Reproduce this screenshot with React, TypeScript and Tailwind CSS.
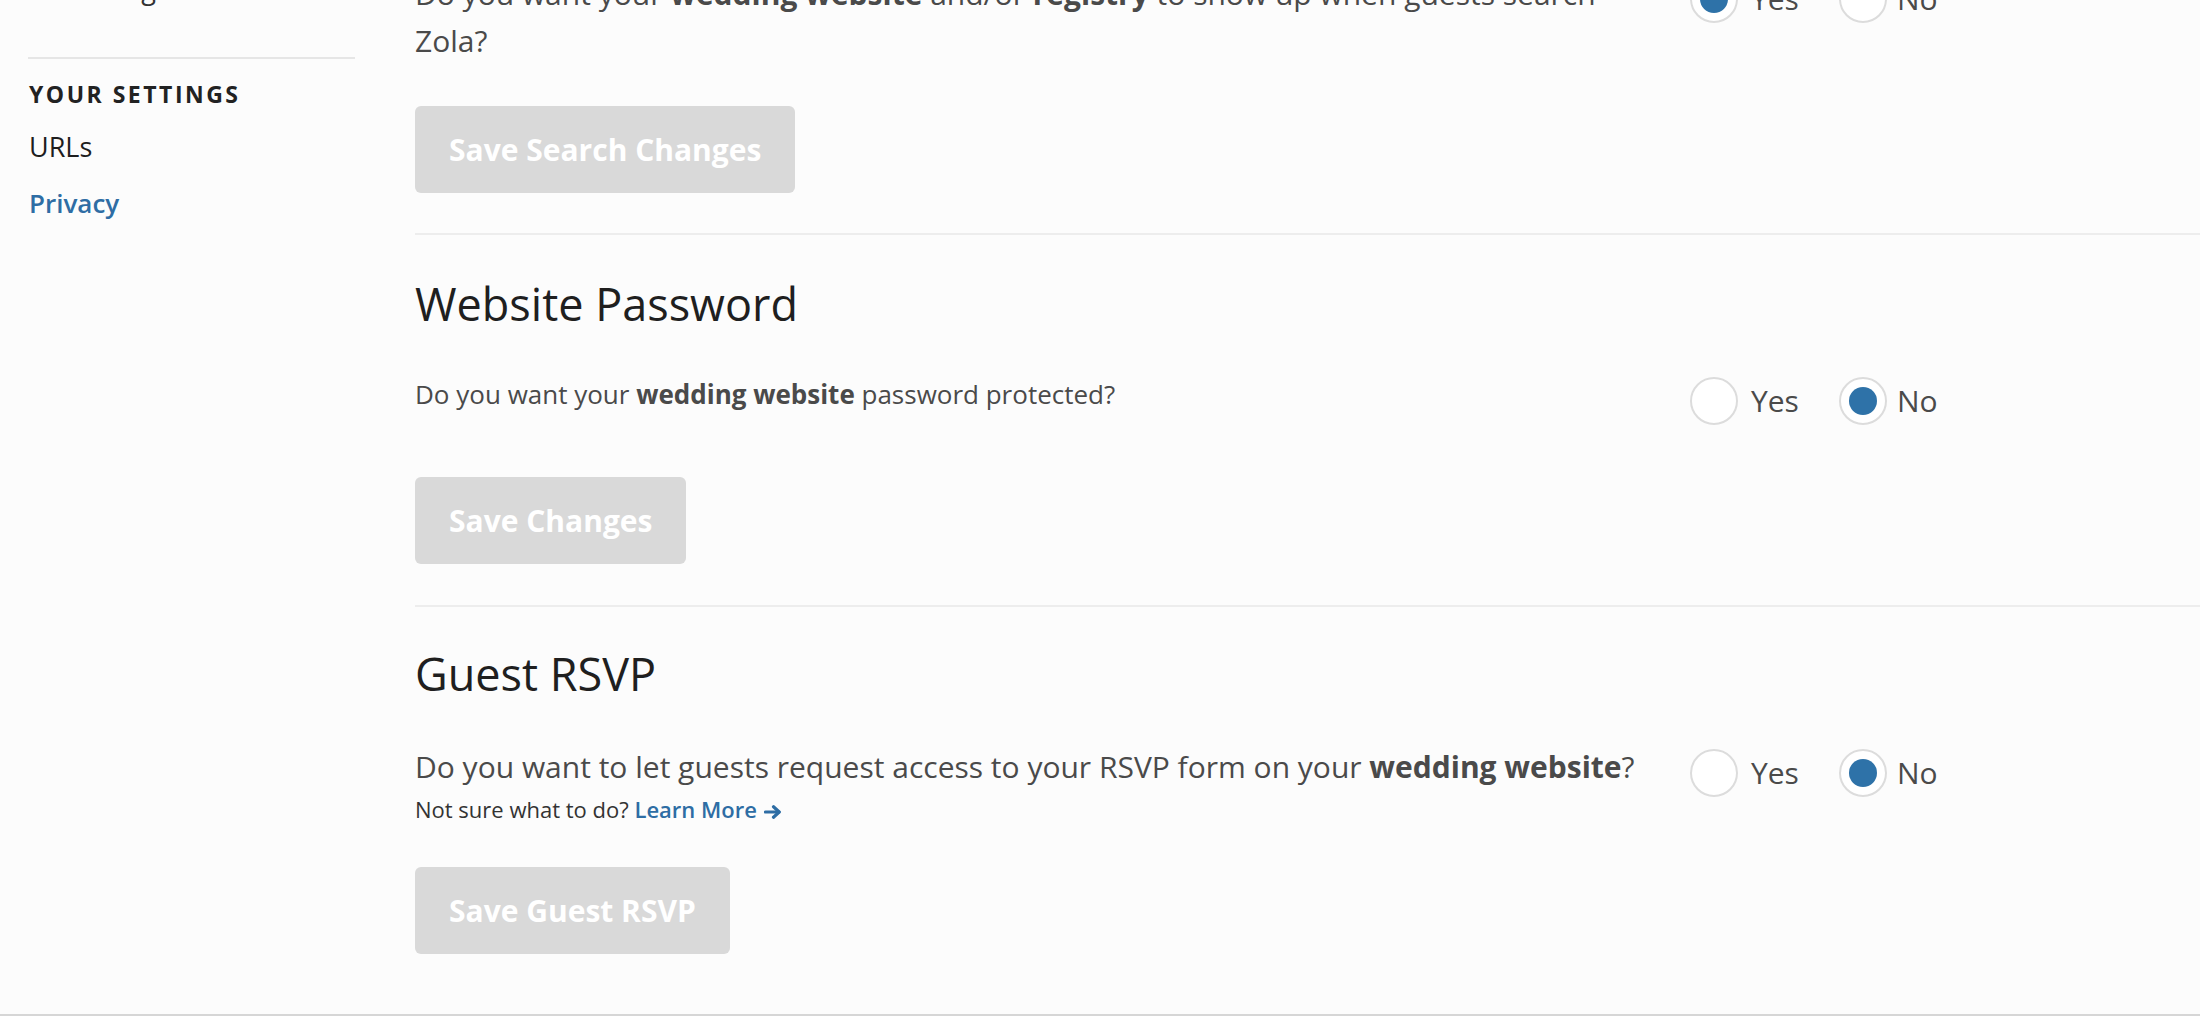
import React from 'react';

type RadioProps = { yes: boolean };

function Dot({ on }: { on: boolean }) {
  return (
    <span className="flex h-[48px] w-[48px] shrink-0 items-center justify-center rounded-full border-2 border-[#dcdcdc] bg-white">
      {on && <span className="h-[28px] w-[28px] rounded-full bg-[#2e72a8]" />}
    </span>
  );
}

function YesNo({ yes }: RadioProps) {
  return (
    <div className="flex items-center text-[30px] leading-[48px] text-[#4a4a4a]">
      <label className="flex items-center">
        <Dot on={yes} />
        <span className="ml-[13px]">Yes</span>
      </label>
      <label className="ml-[40px] flex items-center">
        <Dot on={!yes} />
        <span className="ml-[10px]">No</span>
      </label>
    </div>
  );
}

function SaveButton({ label }: { label: string }) {
  return (
    <button
      disabled
      className="inline-flex h-[87px] items-center rounded-[6px] bg-[#d9d9d9] px-[34px] text-[30px] font-bold text-white"
    >
      {label}
    </button>
  );
}

function Arrow() {
  return (
    <svg width="18" height="14" viewBox="0 0 18 14" className="ml-[7px] inline-block align-[-1px]">
      <path d="M1.5 7H15" stroke="#2e6da4" strokeWidth="3.2" strokeLinecap="round" fill="none" />
      <path d="M9.5 1.8L15.2 7L9.5 12.2" stroke="#2e6da4" strokeWidth="3.2" strokeLinecap="round" strokeLinejoin="round" fill="none" />
    </svg>
  );
}

export default function App() {
  return (
    <div className="h-[1016px] overflow-hidden border-b-2 border-[#d6d6d6] bg-[#fcfcfc] font-['Open_Sans',sans-serif]">
      <div className="-mt-[31px] flex items-start">
        {/* sidebar */}
        <aside className="ml-[28px] w-[327px] shrink-0">
          <a className="block pl-[1px] text-[27px] leading-[40px] text-[#333]">Other Registries</a>
          <div className="mt-[48px] h-[2px] bg-[#e6e6e6]" />
          <h4 className="mt-[20px] pl-[1px] text-[23px] font-bold leading-[30px] tracking-[2.5px] text-[#222]">
            YOUR SETTINGS
          </h4>
          <a className="mt-[10px] block pl-[1px] text-[27px] leading-[56px] text-[#1e1e1e]">URLs</a>
          <a className="block pl-[1px] text-[26px] font-semibold leading-[56px] text-[#2e6da4]">Privacy</a>
        </aside>

        {/* main */}
        <main className="ml-[60px] min-w-0 flex-1 pt-[1px]">
          {/* search */}
          <section className="border-b-2 border-[#ededed] pb-[40px]">
            <div className="flex items-start">
              <p className="mr-[35px] w-[1240px] shrink-0 text-[30px] leading-[47px] text-[#4a4a4a]">
                Do you want your <b className="font-bold">wedding website</b> and/or <b className="font-bold">registry</b> to
                show up when guests search Zola?
              </p>
              <div className="mt-[5px]">
                <YesNo yes />
              </div>
            </div>
            <div className="mt-[42px]">
              <SaveButton label="Save Search Changes" />
            </div>
          </section>

          {/* password */}
          <section className="border-b-2 border-[#ededed] pb-[41px] pt-[41px]">
            <h2 className="text-[45px] leading-[56px] text-[#1f1f1f]">Website Password</h2>
            <div className="mt-[42px] flex items-start">
              <p className="mr-[35px] w-[1240px] shrink-0 text-[26px] leading-[41px] text-[#4a4a4a]">
                Do you want your <b className="font-bold">wedding website</b> password protected?
              </p>
              <div className="mt-[3px]">
                <YesNo yes={false} />
              </div>
            </div>
            <div className="mt-[52px]">
              <SaveButton label="Save Changes" />
            </div>
          </section>

          {/* rsvp */}
          <section className="pt-[39px]">
            <h2 className="text-[45px] leading-[56px] text-[#1f1f1f]">Guest RSVP</h2>
            <div className="mt-[41px] flex items-start">
              <div className="mr-[35px] w-[1240px] shrink-0">
                <p className="text-[30px] leading-[47px] text-[#4a4a4a]">
                  Do you want to let guests request access to your RSVP form on your{' '}
                  <b className="font-bold">wedding website</b>?
                </p>
                <p className="mt-[4px] text-[22px] leading-[30px] text-[#333]">
                  Not sure what to do?{' '}
                  <a className="font-semibold text-[#2e6da4]">
                    Learn More
                    <Arrow />
                  </a>
                </p>
              </div>
              <div className="mt-[6px]">
                <YesNo yes={false} />
              </div>
            </div>
            <div className="mt-[43px]">
              <SaveButton label="Save Guest RSVP" />
            </div>
          </section>
        </main>
      </div>
    </div>
  );
}
